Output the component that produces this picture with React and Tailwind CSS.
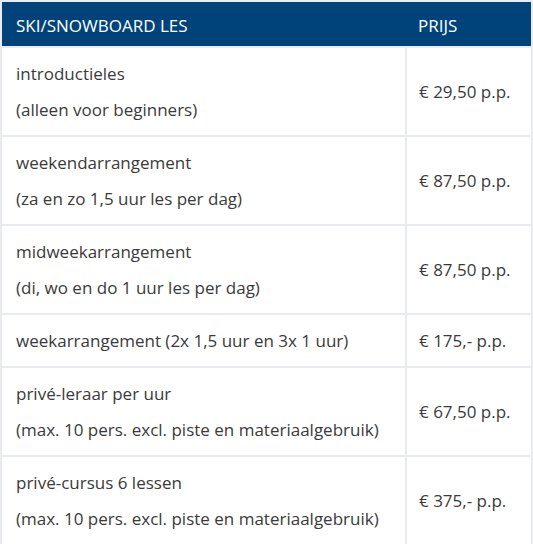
import React from "react";

const rows = [
  { a: "introductieles", b: "(alleen voor beginners)", p: "€ 29,50 p.p." },
  { a: "weekendarrangement", b: "(za en zo 1,5 uur les per dag)", p: "€ 87,50 p.p." },
  { a: "midweekarrangement", b: "(di, wo en do 1 uur les per dag)", p: "€ 87,50 p.p." },
  { a: "weekarrangement (2x 1,5 uur en 3x 1 uur)", b: null, p: "€ 175,- p.p." },
  { a: "privé-leraar per uur", b: "(max. 10 pers. excl. piste en materiaalgebruik)", p: "€ 67,50 p.p." },
  { a: "privé-cursus 6 lessen", b: "(max. 10 pers. excl. piste en materiaalgebruik)", p: "€ 375,- p.p." },
];

export default function App() {
  return (
    <div className="w-[533px] h-[544px] bg-white" style={{ fontFamily: '"Open Sans", sans-serif' }}>
      <table className="w-[533px] border-collapse border-2 border-[#e9ecef] text-[17px] text-[#3a3a3a]">
        <thead>
          <tr className="bg-[#00437b] text-white h-[46px]">
            <th className="text-left font-normal pl-[14px] pt-[3px] uppercase">Ski/snowboard les</th>
            <th className="text-left font-normal pl-[12px] pt-[3px] w-[126px] uppercase">Prijs</th>
          </tr>
        </thead>
        <tbody>
          {rows.map((r, i) => (
            <tr key={i}>
              <td className="border-2 border-[#e9ecef] pl-[14px] pt-[8px] pb-[7px] leading-[36px] align-middle">
                <div>{r.a}</div>
                {r.b && <div>{r.b}</div>}
              </td>
              <td className="border-2 border-[#e9ecef] pl-[12px] leading-[36px] align-middle">{r.p}</td>
            </tr>
          ))}
        </tbody>
      </table>
    </div>
  );
}
